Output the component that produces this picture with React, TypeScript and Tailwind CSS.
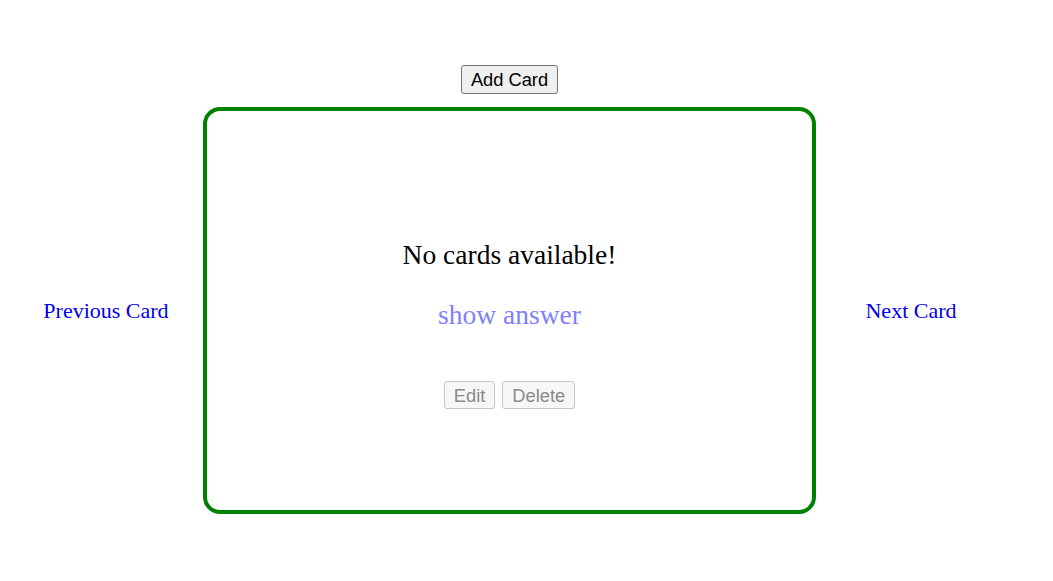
import React from "react";

export default function App() {
  const btn =
    "px-[9px] rounded-[3px] text-[18.3px] leading-[21px] [font-family:'Liberation_Sans',Arial,sans-serif]";
  return (
    <div className="w-[1053px] h-[581px] bg-white overflow-hidden">
      <div className="w-[1019px] flex flex-col items-center pt-[65px]">
        <button
          className={`${btn} h-[29px] bg-[#efefef] border border-[#767676] text-black`}
        >
          Add Card
        </button>
        <div className="mt-[13px] flex items-center">
          <div className="w-[194px] text-center">
            <a
              href="#"
              className="text-[22px] leading-[26px] text-[#0000ee] [font-family:'Liberation_Serif','Times_New_Roman',serif]"
            >
              Previous Card
            </a>
          </div>
          <div className="w-[613px] h-[407px] border-4 border-[#008000] rounded-[17px] flex flex-col items-center [font-family:'Liberation_Serif','Times_New_Roman',serif]">
            <div className="mt-[129px] text-[27.5px] leading-[30px] text-black">
              No cards available!
            </div>
            <div className="mt-[30px] text-[27.5px] leading-[30px] text-[#8080ff]">
              show answer
            </div>
            <div className="mt-[51px] flex gap-[7px]">
              <button
                disabled
                className={`${btn} h-[28px] bg-[#f7f7f7] border border-[#c8c8c8] text-[#8a8a8a]`}
              >
                Edit
              </button>
              <button
                disabled
                className={`${btn} h-[28px] bg-[#f7f7f7] border border-[#c8c8c8] text-[#8a8a8a]`}
              >
                Delete
              </button>
            </div>
          </div>
          <div className="w-[194px] pr-[4px] text-center">
            <a
              href="#"
              className="text-[22px] leading-[26px] text-[#0000ee] [font-family:'Liberation_Serif','Times_New_Roman',serif]"
            >
              Next Card
            </a>
          </div>
        </div>
      </div>
    </div>
  );
}
